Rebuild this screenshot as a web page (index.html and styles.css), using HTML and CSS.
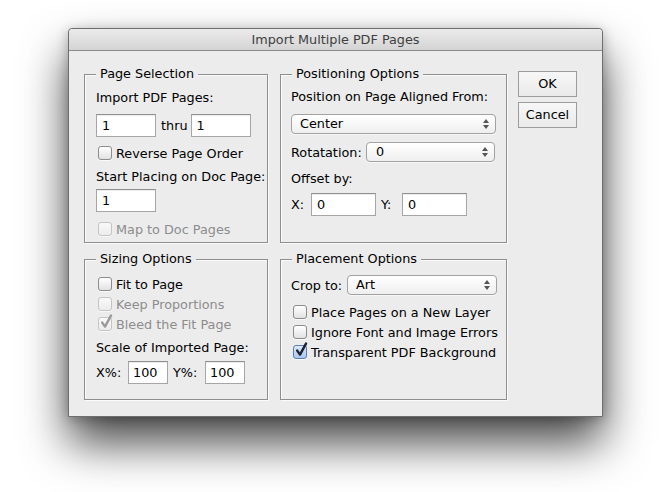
FILE: index.html
```html
<!DOCTYPE html>
<html>
<head>
<meta charset="utf-8">
<link rel="stylesheet" href="styles.css">
</head>
<body>
<div class="window">
  <div class="titlebar">Import Multiple PDF Pages</div>
  <div class="content">
    <div class="panels">
      <section class="group g-pages">
        <span class="legend">Page Selection</span>
        <div class="line l-first">Import PDF Pages:</div>
        <div class="row r-range">
          <span class="field f-range">1</span>
          <span class="thru">thru</span>
          <span class="field f-range">1</span>
        </div>
        <div class="check c-reverse"><span class="box"></span>Reverse Page Order</div>
        <div class="line l-start">Start Placing on Doc Page:</div>
        <div class="row r-start"><span class="field f-range">1</span></div>
        <div class="check disabled c-map"><span class="box"></span>Map to Doc Pages</div>
      </section>

      <section class="group g-pos">
        <span class="legend">Positioning Options</span>
        <div class="line l-first">Position on Page Aligned From:</div>
        <div class="select s-center"><span>Center</span><span class="arrows"><i class="up"></i><i class="down"></i></span></div>
        <div class="row r-rot">
          <span class="rot-label">Rotatation:</span>
          <div class="select s-rot"><span>0</span><span class="arrows"><i class="up"></i><i class="down"></i></span></div>
        </div>
        <div class="line l-offset">Offset by:</div>
        <div class="row r-offset">
          <span class="xlbl">X:</span><span class="field f-off">0</span>
          <span class="ylbl">Y:</span><span class="field f-off">0</span>
        </div>
      </section>

      <section class="group g-size">
        <span class="legend">Sizing Options</span>
        <div class="check c-first"><span class="box"></span>Fit to Page</div>
        <div class="check disabled"><span class="box"></span>Keep Proportions</div>
        <div class="check disabled checked"><span class="box"><svg viewBox="0 0 14 16" width="14" height="16"><path d="M3.2 8.6 L6 12.6 L12 1.6" fill="none" stroke="#9a9a9a" stroke-width="2.4" stroke-linecap="round" stroke-linejoin="round"/></svg></span>Bleed the Fit Page</div>
        <div class="line l-scale">Scale of Imported Page:</div>
        <div class="row r-scale">
          <span class="xplbl">X%:</span><span class="field f-scale">100</span>
          <span class="yplbl">Y%:</span><span class="field f-scale">100</span>
        </div>
      </section>

      <section class="group g-place">
        <span class="legend">Placement Options</span>
        <div class="row r-crop">
          <span class="crop-label">Crop to:</span>
          <div class="select s-crop"><span>Art</span><span class="arrows"><i class="up"></i><i class="down"></i></span></div>
        </div>
        <div class="check c-layer"><span class="box"></span>Place Pages on a New Layer</div>
        <div class="check"><span class="box"></span>Ignore Font and Image Errors</div>
        <div class="check checked on"><span class="box"><svg viewBox="0 0 14 16" width="14" height="16"><path d="M3.2 8.6 L6 12.6 L12 1.6" fill="none" stroke="#1b2233" stroke-width="2.4" stroke-linecap="round" stroke-linejoin="round"/></svg></span>Transparent PDF Background</div>
      </section>
    </div>
    <div class="buttons">
      <div class="button">OK</div>
      <div class="button">Cancel</div>
    </div>
  </div>
</div>
</body>
</html>
```

FILE: styles.css
```css
html, body {
  margin: 0;
  padding: 0;
  background: #ffffff;
}
body {
  width: 668px;
  height: 492px;
  overflow: hidden;
  padding: 28px 0 0 68px;
  box-sizing: border-box;
  font-family: "DejaVu Sans", "Liberation Sans", sans-serif;
  font-size: 12.8px;
  color: #000;
}
.window {
  width: 535px;
  height: 389px;
  box-sizing: border-box;
  background: #ececec;
  border: 1px solid #6e6e6e;
  border-radius: 4px 4px 0 0;
  box-shadow: 0 26px 46px rgba(0,0,0,0.72), 0 2px 12px rgba(0,0,0,0.25);
  display: flex;
  flex-direction: column;
}
.titlebar {
  height: 21px;
  line-height: 22px;
  text-align: center;
  color: #3f3f3f;
  font-size: 12.8px;
  background: linear-gradient(#ebebeb, #d4d4d4);
  border-bottom: 1px solid #8c8c8c;
  border-radius: 4px 4px 0 0;
  flex: none;
}
.content {
  display: flex;
  padding: 20px 0 0 15px;
}
.panels {
  margin-top: 3px;
  display: grid;
  grid-template-columns: 184px 227px;
  grid-template-rows: 169px 141px;
  column-gap: 12px;
  row-gap: 16px;
}
.group {
  position: relative;
  border: 1px solid #8e8e8e;
  box-shadow: 1px 1px 0 #fbfbfb, inset 1px 1px 0 #fbfbfb;
  box-sizing: border-box;
  display: flex;
  flex-direction: column;
  align-items: flex-start;
}
.legend {
  position: absolute;
  top: -9px;
  left: 11px;
  padding: 0 4px;
  background: #ececec;
  line-height: 16px;
}
.g-pages { padding: 15px 0 0 11px; }
.g-pos { padding: 14px 0 0 10px; }
.g-size { padding: 14px 0 0 11px; }
.g-place { padding: 15px 0 0 10px; }

.line { line-height: 16px; height: 16px; white-space: nowrap; }
.row { display: flex; align-items: center; }

.field {
  display: block;
  box-sizing: border-box;
  height: 23px;
  line-height: 21px;
  padding-left: 5px;
  background: #fff;
  border: 1px solid #a6a6a6;
  border-top-color: #8f8f8f;
  box-shadow: inset 0 1px 1px rgba(0,0,0,0.08);
}
.f-range { width: 60px; }
.r-range { margin-top: 8px; }
.thru { margin: 0 3px 0 5px; }
.c-reverse { margin-top: 6px; }
.l-start { margin-top: 6px; }
.r-start { margin-top: 4px; }
.c-map { margin-top: 7px; }

.check {
  display: flex;
  align-items: center;
  height: 20px;
  white-space: nowrap;
  padding-left: 2px;
}
.box {
  position: relative;
  width: 14px;
  height: 14px;
  box-sizing: border-box;
  border: 1px solid #8c8c8c;
  border-radius: 3px;
  background: linear-gradient(#ffffff, #e2e2e2);
  box-shadow: 0 1px 0 rgba(255,255,255,0.7);
  margin-right: 4px;
  flex: none;
}
.box svg {
  position: absolute;
  left: 0;
  top: -4px;
}
.check.disabled { color: #8d8d8d; }
.check.disabled .box {
  border-color: #c4c4c4;
  background: linear-gradient(#f9f9f9, #ececec);
}
.check.on .box {
  border-color: #5d7fae;
  background: linear-gradient(#dbe8f8, #a8c6ec);
}

.select {
  position: relative;
  box-sizing: border-box;
  height: 20px;
  line-height: 18px;
  border: 1px solid #a2a2a2;
  border-radius: 4px;
  background: linear-gradient(#ffffff, #efefef);
  box-shadow: 0 1px 0 rgba(255,255,255,0.6);
  padding-left: 8px;
  display: flex;
  align-items: center;
  justify-content: space-between;
}
.arrows {
  display: flex;
  flex-direction: column;
  gap: 2px;
  margin-right: 6px;
}
.arrows i {
  display: block;
  width: 0;
  height: 0;
  border-left: 3px solid transparent;
  border-right: 3px solid transparent;
}
.arrows .up { border-bottom: 4px solid #555; }
.arrows .down { border-top: 4px solid #555; }

.s-center { width: 205px; margin-top: 9px; }
.r-rot { margin-top: 8px; }
.rot-label { width: 75px; }
.s-rot { width: 129px; padding-left: 9px; }
.l-offset { margin-top: 9px; }
.r-offset { margin-top: 6px; }
.f-off { width: 65px; height: 23px; }
.xlbl { width: 20px; }
.ylbl { width: 21px; margin-left: 5px; }

.c-first { margin-top: 0; }
.l-scale { margin-top: 6px; }
.r-scale { margin-top: 5px; }
.xplbl { width: 32px; }
.yplbl { width: 32px; margin-left: 5px; }
.f-scale { width: 40px; padding-left: 4px; }

.r-crop { margin-top: 0; }
.crop-label { width: 56px; }
.s-crop { width: 150px; }
.c-layer { margin-top: 7px; }

.buttons {
  margin-left: 11px;
  display: flex;
  flex-direction: column;
  gap: 5px;
}
.button {
  width: 59px;
  height: 26px;
  box-sizing: border-box;
  border: 1px solid #9c9c9c;
  background: linear-gradient(#f7f7f7, #eaeaea);
  text-align: center;
  line-height: 24px;
}
```
